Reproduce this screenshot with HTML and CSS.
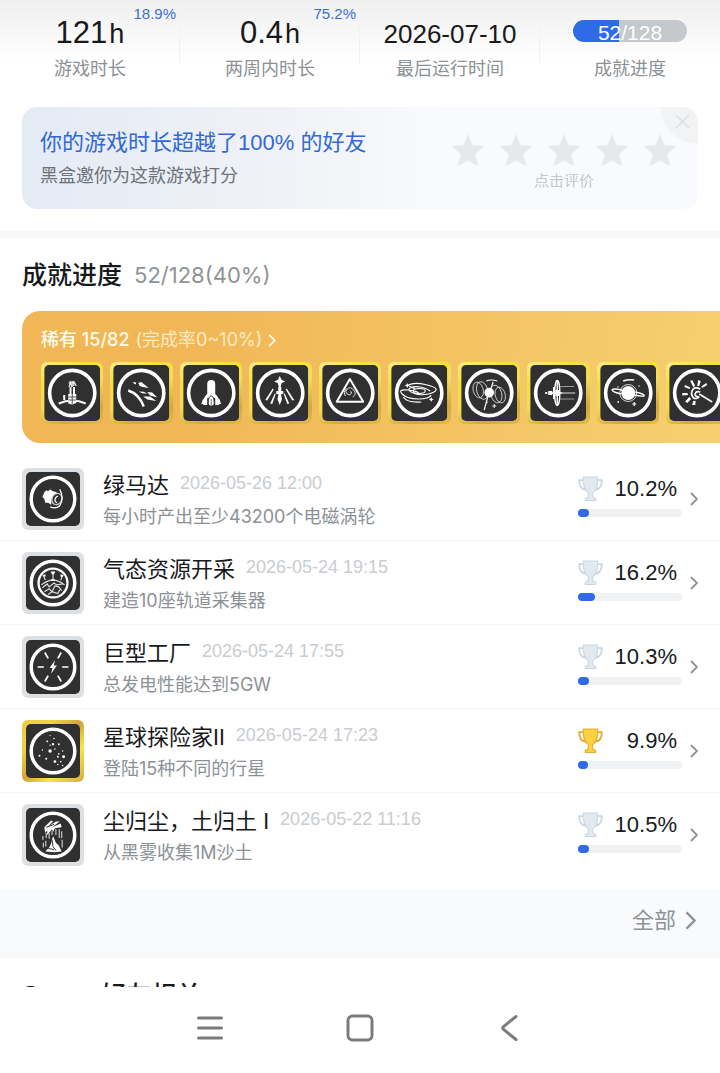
FILE: index.html
```html
<!DOCTYPE html>
<html lang="zh-CN">
<head>
    <meta charset="UTF-8">
    <meta name="viewport" content="width=device-width, initial-scale=1.0">
    <title>成就进度</title>
    <link rel="stylesheet" href="styles.css">
</head>
<body>
    <!-- Shared shapes -->
    <svg class="sprite" aria-hidden="true">
        <symbol id="ring" viewBox="0 0 56 56">
            <rect width="56" height="56" rx="5" fill="#303030"/>
            <circle cx="28" cy="28" r="22.6" fill="none" stroke="#fff" stroke-width="3.6"/>
        </symbol>
        <symbol id="star" viewBox="0 0 32 32">
            <path fill="currentColor" d="M16 0l4.4 11.3L32 12.3l-8.8 7.9L26.300 32 16 26.500 5.700 32l3.100-11.800L0 12.300l11.600-1z"/>
        </symbol>
        <symbol id="cup" viewBox="0 0 24 24">
            <path fill="none" stroke-width="1.800" d="M5 4H1.200c0 5 1.500 8.500 6 9M19 4h3.800c0 5-1.500 8.500-6 9"/>
            <path stroke-width="1" d="M5 1h14c0 8-.8 13-5.200 15.200l.7 4.300 2.500 1v2H7v-2l2.500-1 .7-4.300C5.800 14 5 9 5 1z"/>
        </symbol>
        <symbol id="arrow" viewBox="0 0 8 14">
            <path fill="none" stroke="currentColor" stroke-width="1.800" d="M1 1l6 6-6 6"/>
        </symbol>
    </svg>

    <main class="content">
        <!-- Play stats -->
        <section class="stats">
            <div class="stat">
                <div class="stat-value">121<small>h</small></div>
                <div class="stat-label">游戏时长</div>
                <span class="stat-rank">18.9%</span>
            </div>
            <div class="stat">
                <div class="stat-value">0.4<small>h</small></div>
                <div class="stat-label">两周内时长</div>
                <span class="stat-rank">75.2%</span>
            </div>
            <div class="stat">
                <div class="stat-value stat-date">2026-07-10</div>
                <div class="stat-label">最后运行时间</div>
            </div>
            <div class="stat">
                <div class="stat-value"><div class="pill">52/128</div></div>
                <div class="stat-label">成就进度</div>
            </div>
        </section>

        <!-- Rating invitation -->
        <section class="invite">
            <div>
                <h2 class="invite-title">你的游戏时长超越了100% 的好友</h2>
                <p class="invite-text">黑盒邀你为这款游戏打分</p>
            </div>
            <div class="rating">
                <div class="stars">
                    <button class="star" aria-label="1"><svg><use href="#star"/></svg></button>
                    <button class="star" aria-label="2"><svg><use href="#star"/></svg></button>
                    <button class="star" aria-label="3"><svg><use href="#star"/></svg></button>
                    <button class="star" aria-label="4"><svg><use href="#star"/></svg></button>
                    <button class="star" aria-label="5"><svg><use href="#star"/></svg></button>
                </div>
                <p class="rating-hint">点击评价</p>
            </div>
            <button class="close" aria-label="关闭">
                <svg viewBox="0 0 16 16"><path fill="none" stroke="currentColor" stroke-width="1.500" d="M1 1l14 14M15 1L1 15"/></svg>
            </button>
        </section>

        <!-- Achievements -->
        <section class="panel">
            <div class="panel-head">
                <h2>成就进度</h2>
                <span class="panel-count">52/128(40%)</span>
            </div>

            <div class="rare">
                <a class="rare-head" href="#">
                    <b>稀有 15/82</b> <span>(完成率0~10%)</span>
                    <svg class="rare-arrow"><use href="#arrow"/></svg>
                </a>
                <div class="rare-tiles">
                    <div class="tile gold"><svg viewBox="0 0 56 56"><use href="#ring"/>
                        <path fill="none" stroke="#fff" stroke-width="2" d="M14.500 38.500Q28 32.500 41.500 38.500M20 35v-5"/>
                        <path fill="#fff" d="M24 29h8v9l-4 1.500-4-1zM25.300 22h2v7h-2zM28.800 22h2v7h-2z"/>
                        <path fill="none" stroke="#ddd" stroke-width="1.300" d="M25 22l1-6 1.500 6M28 16v6M29.500 21v-5l2.500 5M24.500 18h6.500"/>
                        <path stroke="#303030" stroke-width=".8" d="M24 32h8M24 35h8M28 29v10"/></svg></div>
                    <div class="tile gold"><svg viewBox="0 0 56 56"><use href="#ring"/>
                        <path fill="none" stroke="#fff" stroke-width="2.400" d="M15 25.500Q26 29 30.500 41.500"/>
                        <path fill="#fff" d="M20 17l3 .5-.5 2-2-1zM25 18l3-1 7.500 6-6-1-3-1zM25.500 26.500l5 .3 3.500 2-5-.5zM30 31.500l7 0 6 4.500-9-1.500zM34 27l5 .5 5 5-7-2z"/></svg></div>
                    <div class="tile gold"><svg viewBox="0 0 56 56"><use href="#ring"/>
                        <path fill="#fff" d="M24 33V19q0-4 4-4t4 4v14zM22 31l2-2v11h-4v-5zM34 31l-2-2v11h4v-5zM18.500 38l1.500-5v6h-2zM37.500 38l-1.500-5v6h2z"/>
                        <path fill="#fff" stroke="#303030" stroke-width="1" d="M25 39c0-5 1-8 3-8s3 3 3 8l-1.500 2h-3z"/>
                        <path stroke="#303030" stroke-width=".7" d="M28 34v6"/></svg></div>
                    <div class="tile gold"><svg viewBox="0 0 56 56"><use href="#ring"/>
                        <path fill="#fff" d="M27.500 11l1.800 3.700 3.700 1.800-3.700 1.800-.8 3.700h-2l-.8-3.700-3.700-1.800 3.700-1.800zM26 22h3v4h2v3h-2v2l.8 3-2.300 6-2.300-6 .8-3v-2h-2v-3h2z"/>
                        <path fill="#fff" d="M20.500 23.500l1 1-6.500 11-2-.5zM22.500 28.500l1 .5-3.500 10-2-.5zM34.500 23.500l-1 1 6.500 11 2-.5zM32.500 28.500l-1 .5 3.500 10 2-.5z"/></svg></div>
                    <div class="tile gold"><svg viewBox="0 0 56 56"><use href="#ring"/>
                        <path fill="none" stroke="#fff" stroke-width="2" stroke-linejoin="round" d="M27.600 14L14.500 36.700h26.500z"/>
                        <path fill="none" stroke="#ddd" stroke-width="1" d="M28 27q2-1 1 1.500t-4 .5 0-5 6.500 1-1 7M23 31q-2.500-4 1-7.500"/></svg></div>
                    <div class="tile gold"><svg viewBox="0 0 56 56"><use href="#ring"/>
                        <g fill="none" stroke="#fff" stroke-width="1.100"><ellipse cx="28" cy="26" rx="6" ry="2.500"/>
                        <path d="M17 20q6-3 17-.5t11 5-8 4.500-15-1-3-5 10-1 10 4M40 30q-2 4-13 4t-16-5 6-4 12 5M30 37q-14 1-18-5M18 21l6 3"/></g>
                        <path fill="#fff" d="M16 18l.8 1.700 1.700.8-1.700.8L16 23l-.8-1.700-1.700-.8 1.700-.8zM40 32l.8 1.700 1.700.8-1.700.8L40 37l-.8-1.700-1.700-.8 1.700-.8z"/></svg></div>
                    <div class="tile gold"><svg viewBox="0 0 56 56"><use href="#ring"/>
                        <g fill="none" stroke="#ccc" stroke-width=".9"><ellipse cx="21" cy="25.500" rx="5.500" ry="9" transform="rotate(-15 21 25.500)"/><ellipse cx="17" cy="25" rx="5" ry="8" transform="rotate(-15 17 25)"/><ellipse cx="35" cy="29" rx="5.500" ry="9" transform="rotate(-15 35 29)"/><ellipse cx="39" cy="30" rx="5" ry="8" transform="rotate(-15 39 30)"/></g>
                        <path fill="none" stroke="#fff" stroke-width="1.200" d="M25 16q5-2 11 0M28 28l4-11M27 30l-4 15"/>
                        <circle cx="28" cy="27.600" r="4.800" fill="#fff"/><path stroke="#fff" stroke-width=".9" d="M31 41h4M33 39v4M26 37v1"/></svg></div>
                    <div class="tile gold"><svg viewBox="0 0 56 56"><use href="#ring"/>
                        <g fill="none" stroke="#fff" stroke-width="1.400"><ellipse cx="27" cy="28" rx="2.600" ry="12.500"/><path d="M27 15v26M20 28h12M23.500 22v12"/></g>
                        <path fill="#fff" d="M15 27h2v2h-2zM18 26h4v4h-4zM25 25h4v6h-4z"/>
                        <path stroke="#999" d="M30 21.500h14M30 34h14"/><path stroke="#ddd" d="M30 28h15"/></svg></div>
                    <div class="tile gold"><svg viewBox="0 0 56 56"><use href="#ring"/>
                        <path fill="none" stroke="#fff" stroke-width="1.500" d="M21 29q-9-2-9-4t10 0M34 30q10 2 10 .5t-9-3.500M23 16q5-2 11-1"/>
                        <circle cx="28" cy="28" r="7" fill="#fff"/>
                        <circle cx="28" cy="28" r="8.500" fill="none" stroke="#fff" stroke-width=".8"/>
                        <path stroke="#fff" stroke-width="1.200" d="M34 37v4M32 39h4M18 36v2M17 22h1.500M38 21h1.500"/></svg></div>
                    <div class="tile gold"><svg viewBox="0 0 56 56"><use href="#ring"/>
                        <path fill="#fff" d="M24 22l-3-6 2-1 3 6zM28 21l1-6 2.500 1-1.500 5zM20 24l-5-2 1-2 5 2.500zM18 28h-5v2.500l6-.5zM20 32l-4 4.500 2 1.500 4-4zM24 36l-1 4h3l.5-4zM33 23l5-3-1-2-5 3.500z"/>
                        <path fill="none" stroke="#fff" stroke-width="1.700" d="M31 24q-6-3-8 1.500t2 8q4 0 5-2M31 27q-4-1-5 1.500t3 3.500M30 29l13 8"/></svg></div>
                </div>
            </div>

            <div class="list">
                <a class="row" href="#">
                    <div class="tile"><svg viewBox="0 0 56 56"><use href="#ring"/>
                        <path fill="#fff" d="M19 21l2-2 2 1 2-2 3 2 4 1-5 6-1 7-3-2-3 0-1-4-2-2z"/>
                        <ellipse cx="32" cy="28" rx="5" ry="6" fill="#303030" stroke="#ccc" stroke-width="1.300" transform="rotate(25 32 28)"/>
                        <path fill="none" stroke="#fff" stroke-width="1.300" d="M35 18q5 9 0 17-4 4-10 1M33 25q-3 1-3 5l2 2"/></svg></div>
                    <div class="row-main">
                        <div class="row-top"><h3>绿马达</h3><time>2026-05-26 12:00</time></div>
                        <p>每小时产出至少43200个电磁涡轮</p>
                    </div>
                    <div class="rate">
                        <div class="rate-top"><svg class="cup"><use href="#cup"/></svg><span>10.2%</span></div>
                        <div class="bar"><div class="bar-fill" style="width: 10.2%"></div></div>
                    </div>
                    <svg class="row-arrow"><use href="#arrow"/></svg>
                </a>
                <a class="row" href="#">
                    <div class="tile"><svg viewBox="0 0 56 56"><use href="#ring"/>
                        <circle cx="28" cy="28" r="15" fill="none" stroke="#fff" stroke-width="2.400"/>
                        <path fill="none" stroke="#ddd" stroke-width="1.200" d="M16 30q12-10 24 0M17 33l5-4 2 3 5-4 3 2 6-1M19 37l5-3 3 3 3-6 4 1 3 4M23 40l4-3 6 2 2-4M28 26v-9M20 25l-2-5M36 25l2-5"/>
                        <path fill="#fff" d="M25.500 16h5l-1.500 3h-2zM17 20l3-1 .5 2-2 .5zM36 19l3 1-1.500 2-2-1zM26 24h4v2h-4z"/></svg></div>
                    <div class="row-main">
                        <div class="row-top"><h3>气态资源开采</h3><time>2026-05-24 19:15</time></div>
                        <p>建造10座轨道采集器</p>
                    </div>
                    <div class="rate">
                        <div class="rate-top"><svg class="cup"><use href="#cup"/></svg><span>16.2%</span></div>
                        <div class="bar"><div class="bar-fill" style="width: 16.2%"></div></div>
                    </div>
                    <svg class="row-arrow"><use href="#arrow"/></svg>
                </a>
                <a class="row" href="#">
                    <div class="tile"><svg viewBox="0 0 56 56"><use href="#ring"/>
                        <path stroke="#fff" stroke-width="1.800" d="M12 28h6.500M37.500 28H44M19.500 13l3.500 6M36.500 13L33 19M19.500 43l3.500-6M36.500 43L33 37"/>
                        <path fill="#fff" d="M30 21l-5.500 8h3L26 35l6-8.500h-3.200z"/></svg></div>
                    <div class="row-main">
                        <div class="row-top"><h3>巨型工厂</h3><time>2026-05-24 17:55</time></div>
                        <p>总发电性能达到5GW</p>
                    </div>
                    <div class="rate">
                        <div class="rate-top"><svg class="cup"><use href="#cup"/></svg><span>10.3%</span></div>
                        <div class="bar"><div class="bar-fill" style="width: 10.3%"></div></div>
                    </div>
                    <svg class="row-arrow"><use href="#arrow"/></svg>
                </a>
                <a class="row" href="#">
                    <div class="tile gold"><svg viewBox="0 0 56 56"><use href="#ring"/>
                        <g fill="#fff"><circle cx="25" cy="28" r="1.800"/><circle cx="22" cy="18" r="1"/><circle cx="28" cy="21" r="1.200"/><circle cx="29" cy="15" r=".8"/><circle cx="34" cy="21" r="1"/><circle cx="30" cy="26" r=".8"/><circle cx="39" cy="34" r="1.500"/><circle cx="30" cy="39" r="1.400"/><circle cx="21" cy="36" r="1"/><circle cx="14" cy="33" r="1"/><circle cx="34" cy="31" r=".8"/><circle cx="33" cy="34" r="1"/><circle cx="36" cy="39" r=".9"/><circle cx="33" cy="42" r=".8"/><circle cx="38" cy="28" r=".7"/><circle cx="17" cy="27" r=".7"/><circle cx="25" cy="12" r=".7"/><circle cx="38" cy="43" r=".8"/><circle cx="25" cy="22" r=".7"/></g></svg></div>
                    <div class="row-main">
                        <div class="row-top"><h3>星球探险家II</h3><time>2026-05-24 17:23</time></div>
                        <p>登陆15种不同的行星</p>
                    </div>
                    <div class="rate">
                        <div class="rate-top"><svg class="cup cup-gold"><use href="#cup"/></svg><span>9.9%</span></div>
                        <div class="bar"><div class="bar-fill" style="width: 9.9%"></div></div>
                    </div>
                    <svg class="row-arrow"><use href="#arrow"/></svg>
                </a>
                <a class="row" href="#">
                    <div class="tile"><svg viewBox="0 0 56 56"><use href="#ring"/>
                        <path fill="#fff" d="M19 20l7-7 2 1-6 6 9-6 4 0-8 6 9-4 1 4-7 1-2 4-1-3-5 6 0-5-2 3zM28 29l3 7 3 3 3 6-8 1-9-1 4-4 2-4z"/>
                        <path fill="none" stroke="#ccc" stroke-width="1.200" d="M17.500 29v4M18 36v5M21 26v5M20.500 34v6M24 26v6M27 24v4M31 22v6M34.500 22v9M37 24v7M37.500 33v8"/>
                        <path fill="none" stroke="#303030" stroke-width="1" d="M27 33l1 7 3 4M23 42l6 1M21 20l8-3"/></svg></div>
                    <div class="row-main">
                        <div class="row-top"><h3>尘归尘，土归土 I</h3><time>2026-05-22 11:16</time></div>
                        <p>从黑雾收集1M沙土</p>
                    </div>
                    <div class="rate">
                        <div class="rate-top"><svg class="cup"><use href="#cup"/></svg><span>10.5%</span></div>
                        <div class="bar"><div class="bar-fill" style="width: 10.5%"></div></div>
                    </div>
                    <svg class="row-arrow"><use href="#arrow"/></svg>
                </a>
            </div>

            <a class="more" href="#">全部 <svg><use href="#arrow"/></svg></a>
        </section>

        <!-- Friends -->
        <section class="panel">
            <div class="panel-head">
                <h2>Steam 好友相关</h2>
                <svg class="head-arrow"><use href="#arrow"/></svg>
            </div>
        </section>
    </main>

    <!-- System navigation -->
    <nav class="navbar">
        <button aria-label="菜单"><svg viewBox="0 0 30 30"><path d="M3.500 5h23M3.500 15h23M3.500 25h23"/></svg></button>
        <button aria-label="主页"><svg viewBox="0 0 30 30"><rect x="3" y="3" width="24" height="24" rx="4.500"/></svg></button>
        <button aria-label="返回"><svg viewBox="0 0 30 30"><path d="M21 3.500L8.500 13.500q-1.500 1.500 0 3L21 26.500"/></svg></button>
    </nav>
</body>
</html>
```
FILE: styles.css
```css
* {
    margin: 0;
    padding: 0;
    box-sizing: border-box;
}

body {
    display: flex;
    flex-direction: column;
    height: 100vh;
    background: #fff;
    color: #17191c;
    font-family: Inter, 'Noto Sans CJK SC', sans-serif;
}

a {
    color: inherit;
    text-decoration: none;
}

button {
    border: none;
    background: none;
    cursor: pointer;
}

svg {
    display: block;
}

.sprite {
    position: absolute;
    width: 0;
    height: 0;
}

.content {
    flex: 1;
    min-height: 0;
    overflow-y: auto;
    scrollbar-width: none;
}

/* Play stats */
.stats {
    display: grid;
    grid-template-columns: repeat(4, 1fr);
    padding: 17px 0 26px;
    background: linear-gradient(#efefef, #fff 60px);
}

.stat {
    position: relative;
    text-align: center;
}

.stat + .stat::before {
    content: "";
    position: absolute;
    left: -1px;
    top: 8px;
    width: 1px;
    height: 38px;
    background: #f0f1f2;
}

.stat-value {
    display: flex;
    justify-content: center;
    align-items: baseline;
    gap: 2px;
    height: 32px;
    line-height: 32px;
    font-family: 'Liberation Sans', sans-serif;
    font-size: 31px;
}

.stat-value small {
    font-size: 27px;
}

.stat-date {
    font-size: 26px;
    line-height: 34px;
}

.stat-label {
    margin-top: 8px;
    color: #8c9196;
    font-size: 18px;
    line-height: 24px;
}

.stat-rank {
    position: absolute;
    top: -12px;
    right: 4px;
    color: #3a6fd8;
    font-family: 'Liberation Sans', sans-serif;
    font-size: 15px;
    line-height: 18px;
}

.pill {
    width: 114px;
    height: 22px;
    margin-top: 3px;
    border-radius: 11px;
    background: linear-gradient(90deg, #2f6be6 40%, #c5c8cc 40%);
    color: #fff;
    font-size: 21px;
    line-height: 26px;
}

/* Rating invitation */
.invite {
    position: relative;
    display: flex;
    justify-content: space-between;
    align-items: center;
    min-height: 102px;
    margin: 0 22px 22px;
    padding: 0 22px 0 18px;
    border-radius: 15px;
    background: linear-gradient(90deg, #e4ebf5, #eff1f6 35%, #f9fafd 62%);
    overflow: hidden;
}

.invite-title {
    color: #3269d3;
    font-family: 'Liberation Sans', 'Noto Sans CJK SC', sans-serif;
    font-size: 22px;
    font-weight: 400;
    line-height: 30px;
}

.invite-text {
    margin-top: 5px;
    color: #6d7278;
    font-size: 18px;
    line-height: 26px;
}

.rating {
    padding-top: 8px;
    text-align: center;
}

.stars {
    display: flex;
    gap: 16px;
}

.star,
.star svg {
    width: 32px;
    height: 34px;
    color: #e7e8ea;
}

.rating-hint {
    margin-top: 4px;
    color: #c4c7cc;
    font-size: 15px;
    line-height: 20px;
}

.close {
    position: absolute;
    top: 0;
    right: 0;
    width: 37px;
    height: 37px;
    border-bottom-left-radius: 37px;
    background: #f2f3f5;
    color: #dcdee1;
}

.close svg {
    width: 15px;
    height: 15px;
    margin: -8px 0 0 14px;
}

/* Panels */
.panel {
    border-top: 7px solid #f6f7f8;
}

.panel-head {
    display: flex;
    align-items: center;
    gap: 12px;
    height: 73px;
    padding: 0 22px;
}

.panel-head h2 {
    font-family: 'Liberation Sans', 'Noto Sans CJK SC', sans-serif;
    font-size: 25px;
    font-weight: 500;
    line-height: 36px;
}

.panel-count {
    color: #8f9398;
    font-size: 22px;
    line-height: 36px;
}

.head-arrow {
    width: 8px;
    height: 14px;
}

/* Rare achievements */
.rare {
    margin-left: 22px;
    padding: 16px 0 19px 19px;
    border-radius: 18px 0 0 18px;
    background: linear-gradient(100deg, #f1b757 25%, #f6d06f);
    overflow: hidden;
}

.rare-head {
    display: flex;
    align-items: center;
    gap: 6px;
    color: #fffbe9;
    font-size: 18px;
    line-height: 26px;
}

.rare-head b {
    font-weight: 500;
}

.rare-head span {
    color: #fdebc4;
}

.rare-arrow {
    width: 8px;
    height: 13px;
}

.rare-tiles {
    display: flex;
    gap: 7px;
    margin-top: 9px;
}

.rare-tiles .tile {
    flex: 0 0 9.2%;
}

.tile {
    width: 62px;
    height: 62px;
    padding: 3px;
    border-radius: 6px;
    background: #dde0e3;
}

.tile svg {
    width: 100%;
    height: 100%;
}

.tile.gold {
    background: linear-gradient(135deg, #eccb45, #f0d53c 25%, #d3a436 50%, #f7e54c 70%, #d9ab40);
}

.rare .tile.gold {
    background: linear-gradient(155deg, #fbec8c, #f3e03f 25%, #f3dc5a 50%, #d2a93a 80%, #e5bb50);
}

/* Achievement list */
.list {
    padding: 14px 0 12px;
}

.list .tile {
    padding: 4px;
}

.row {
    display: flex;
    align-items: center;
    height: 84px;
    padding: 0 22px;
    border-bottom: 1px solid #f3f4f5;
}

.row:last-child {
    border-bottom-color: transparent;
}

.row-main {
    flex: 1;
    min-width: 0;
    margin-left: 19px;
    padding-top: 2px;
}

.row-top {
    display: flex;
    align-items: flex-start;
    gap: 11px;
}

.row h3 {
    font-size: 22px;
    font-weight: 400;
    line-height: 30px;
}

.row time {
    color: #c9ccd0;
    font-family: 'Liberation Sans', sans-serif;
    font-size: 18px;
    line-height: 26px;
}

.row p {
    margin-top: 4px;
    color: #8c9196;
    font-size: 18px;
    line-height: 26px;
}

.rate {
    width: 104px;
    padding-bottom: 4px;
}

.rate-top {
    display: flex;
    justify-content: space-between;
    align-items: center;
    padding-right: 5px;
    font-family: 'Liberation Sans', sans-serif;
    font-size: 22px;
    line-height: 24px;
}

.cup {
    width: 25px;
    height: 25px;
    fill: #e3eaef;
    stroke: #cbd8e4;
}

.cup-gold {
    fill: #fad13e;
    stroke: #e3ac35;
}

.bar {
    height: 8px;
    margin-top: 8px;
    border-radius: 4px;
    background: #f1f2f4;
}

.bar-fill {
    height: 100%;
    border-radius: 4px;
    background: #2f6be6;
}

.row-arrow {
    width: 8px;
    height: 14px;
    margin-left: 8px;
    color: #8f9398;
}

.more {
    display: flex;
    justify-content: flex-end;
    align-items: center;
    gap: 9px;
    height: 62px;
    padding: 0 24px;
    background: #f9fafc;
    color: #8f9398;
    font-size: 22px;
    line-height: 28px;
}

.more svg {
    width: 11px;
    height: 19px;
}

/* System navigation */
.navbar {
    display: flex;
    justify-content: center;
    height: 86px;
    padding-bottom: 4px;
    background: #fff;
}

.navbar button {
    display: flex;
    justify-content: center;
    align-items: center;
    width: 150px;
}

.navbar svg {
    width: 30px;
    height: 30px;
    fill: none;
    stroke: #7b7b7b;
    stroke-width: 3;
    stroke-linecap: round;
}
```
